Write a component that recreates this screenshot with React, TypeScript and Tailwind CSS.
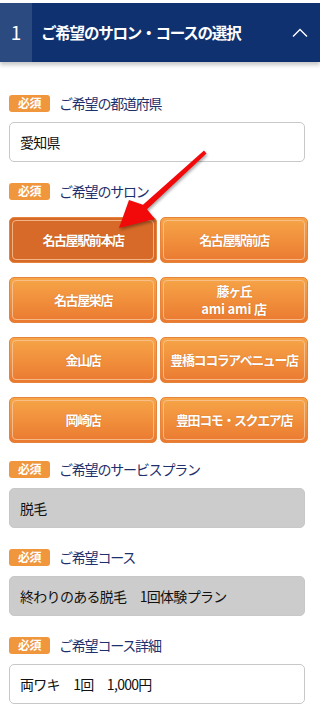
import React from "react";

const font = { fontFamily: '"Noto Sans CJK JP", "Noto Sans", sans-serif' };

function Label({ text }: { text: string }) {
  return (
    <div className="flex items-center h-[18px]">
      <span className="w-[41px] h-[17px] rounded-[3px] bg-[#f0963c] text-white text-[12px] font-bold flex items-center justify-center leading-none tracking-[-0.5px]">
        必須
      </span>
      <span className="ml-[9px] text-[14px] tracking-[-1.2px] text-[#1d2f6c] leading-none">{text}</span>
    </div>
  );
}

function Field({ text, gray }: { text: string; gray?: boolean }) {
  return (
    <div
      className={`mt-[10px] h-[40px] w-[296px] rounded-[5px] border border-[#c8c8c8] flex items-center pl-[10px] text-[14px] tracking-[-0.7px] text-[#111] ${
        gray ? "bg-[#cccccc]" : "bg-white"
      }`}
    >
      {text}
    </div>
  );
}

function Btn({ children, selected }: { children: React.ReactNode; selected?: boolean }) {
  return (
    <div
      className={`h-[46px] rounded-[5px] border border-[#e5843a] p-[2px] ${
        selected ? "bg-[#d76a28]" : "bg-gradient-to-b from-[#f6a548] to-[#ea7930]"
      }`}
    >
      <div className="h-full w-full rounded-[4px] border border-[#f9c79a]/80 flex flex-col items-center justify-center text-center text-white font-bold text-[13px] tracking-[-1.4px] whitespace-nowrap leading-[18px] [text-shadow:0_0_1px_rgba(160,70,10,0.6)]">
        {children}
      </div>
    </div>
  );
}

export default function App() {
  return (
    <div className="relative w-[320px] h-[712px] bg-white overflow-hidden" style={font}>
      <div className="pt-[3px]">
        <div className="h-[59px] flex bg-[#10316f] shadow-[0_3px_4px_rgba(0,0,0,0.22)]">
          <div className="w-[32px] bg-[#2b4a7f] flex items-center justify-center text-white text-[19px]">1</div>
          <div className="flex-1 flex items-center pl-[9px] text-white font-bold text-[15.5px] tracking-[-1.2px]">
            ご希望のサロン・コースの選択
          </div>
          <div className="w-[40px] flex items-center justify-center">
            <svg width="16" height="10" viewBox="0 0 16 10">
              <polyline points="1,8.5 8,1.5 15,8.5" fill="none" stroke="white" strokeWidth="1.4" />
            </svg>
          </div>
        </div>
      </div>

      <div className="px-[9px]">
        <div className="mt-[32px]">
          <Label text="ご希望の都道府県" />
          <Field text="愛知県" />
        </div>

        <div className="mt-[20px]">
          <Label text="ご希望のサロン" />
          <div className="mt-[17px] w-[299px] grid grid-cols-2 gap-x-[3px] gap-y-[14px]">
            <Btn selected>名古屋駅前本店</Btn>
            <Btn>名古屋駅前店</Btn>
            <Btn>名古屋栄店</Btn>
            <Btn>
              <span>藤ヶ丘</span>
              <span className="tracking-[-0.2px]">ami ami 店</span>
            </Btn>
            <Btn>金山店</Btn>
            <Btn>豊橋ココラアベニュー店</Btn>
            <Btn>岡崎店</Btn>
            <Btn>豊田コモ・スクエア店</Btn>
          </div>
        </div>

        <div className="mt-[17px]">
          <Label text="ご希望のサービスプラン" />
          <Field text="脱毛" gray />
        </div>

        <div className="mt-[20px]">
          <Label text="ご希望コース" />
          <Field text="終わりのある脱毛　1回体験プラン" gray />
        </div>

        <div className="mt-[20px]">
          <Label text="ご希望コース詳細" />
          <Field text="両ワキ　1回　1,000円" />
        </div>
      </div>

      <svg
        className="absolute left-0 top-0 pointer-events-none"
        width="320"
        height="712"
        viewBox="0 0 320 712"
        style={{ filter: "drop-shadow(1px 2px 1.5px rgba(0,0,0,0.35))" }}
      >
        <polygon
          points="204,150.5 143,204.8 129,200 119,228 155,219 147,209.2 206.5,153.5"
          fill="#f20a0a"
        />
      </svg>
    </div>
  );
}
